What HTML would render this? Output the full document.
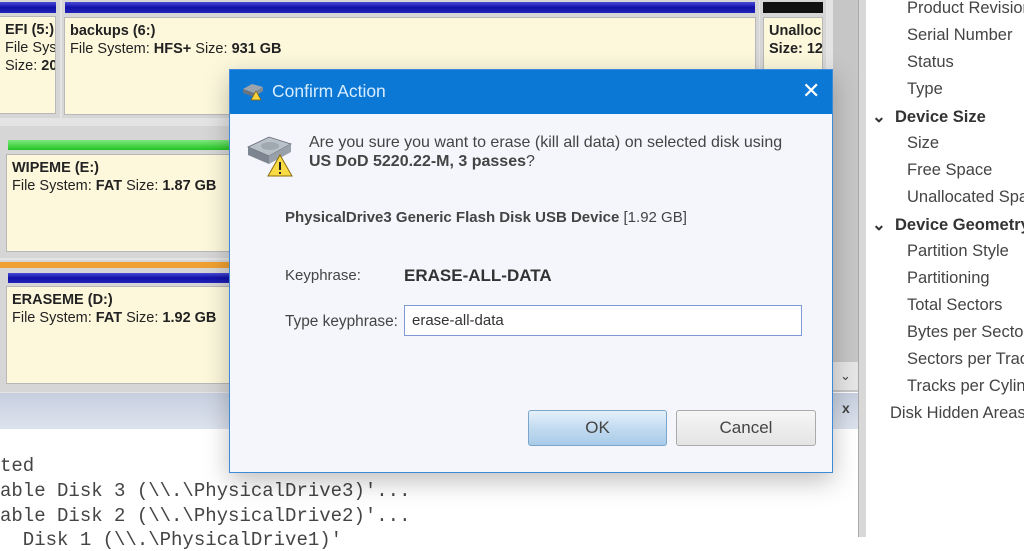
<!DOCTYPE html>
<html><head><meta charset="utf-8"><style>
*{margin:0;padding:0;box-sizing:border-box}
body{width:1024px;height:537px;overflow:hidden;background:#fff;font-family:"Liberation Sans",sans-serif;position:relative;color:#222}
.a{position:absolute}
.part{position:absolute;background:#fdf8dc;border:1px solid #b8b8b8;font-size:14.5px;line-height:18px;padding:4px 5px;color:#222;white-space:nowrap;overflow:hidden}
.bar{position:absolute;height:11px;background:linear-gradient(#4a4ad8,#1010a8 50%,#2424b8)}
.tree{position:absolute;font-size:16.5px;color:#444;white-space:nowrap}
.mono{position:absolute;font-family:"Liberation Mono",monospace;font-size:19px;color:#444;white-space:pre}
</style></head><body>
<div class="a" style="left:0;top:0;width:833px;height:395px;background:#e4e4e4"></div>
<div class="a" style="left:0;top:0;width:60px;height:118px;background:#d6d6d6"></div>
<div class="bar" style="left:0;top:2px;width:56px"></div>
<div class="part" style="left:-1px;top:16px;width:57px;height:98px"><b>EFI (5:)</b><br>File Sys<br>Size: <b>20</b></div>
<div class="a" style="left:62px;top:0;width:697px;height:118px;background:#d6d6d6"></div>
<div class="bar" style="left:65px;top:2px;width:690px"></div>
<div class="part" style="left:64px;top:17px;width:692px;height:98px"><b>backups (6:)</b><br>File System: <b>HFS+</b> Size: <b>931 GB</b></div>
<div class="a" style="left:760px;top:0;width:66px;height:118px;background:#d6d6d6"></div>
<div class="bar" style="left:763px;top:2px;width:60px;background:#111"></div>
<div class="part" style="left:763px;top:17px;width:60px;height:98px"><b>Unalloc</b><br><b>Size: 12</b></div>
<div class="a" style="left:0;top:126px;width:833px;height:132px;background:#d6d6d6"></div>
<div class="bar" style="left:8px;top:140px;width:230px;height:10px;background:linear-gradient(#7ee87e,#22c422)"></div>
<div class="part" style="left:6px;top:154px;width:230px;height:98px"><b>WIPEME (E:)</b><br>File System: <b>FAT</b> Size: <b>1.87 GB</b></div>
<div class="a" style="left:0;top:260px;width:833px;height:132px;background:#d6d6d6"></div>
<div class="a" style="left:0;top:262px;width:240px;height:6px;background:#f0a030"></div>
<div class="bar" style="left:8px;top:273px;width:230px;height:10px"></div>
<div class="part" style="left:6px;top:286px;width:230px;height:98px"><b>ERASEME (D:)</b><br>File System: <b>FAT</b> Size: <b>1.92 GB</b></div>
<div class="a" style="left:833px;top:0;width:25px;height:392px;background:#c6c6c6"></div>
<div class="a" style="left:833px;top:362px;width:25px;height:28px;background:#e6e6e6;font-size:13px;text-align:center;line-height:28px;color:#444">&#8964;</div>
<div class="a" style="left:858px;top:0;width:8px;height:537px;background:#d8d8d8;border-left:1px solid #aaa"></div>
<div class="a" style="left:0;top:393px;width:858px;height:36px;background:linear-gradient(#c7cfdf,#dde3ee)"></div>
<div class="a" style="left:842px;top:400px;width:16px;height:24px;font-size:14px;font-weight:bold;color:#444">x</div>
<div class="mono" style="left:0;top:455px">ted</div>
<div class="mono" style="left:0;top:480px">able Disk 3 (\\.\PhysicalDrive3)'...</div>
<div class="mono" style="left:0;top:505px">able Disk 2 (\\.\PhysicalDrive2)'...</div>
<div class="mono" style="left:0;top:529px">  Disk 1 (\\.\PhysicalDrive1)'</div>
<div class="tree" style="left:907px;top:-1px">Product Revision</div>
<div class="tree" style="left:907px;top:26px">Serial Number</div>
<div class="tree" style="left:907px;top:53px">Status</div>
<div class="tree" style="left:907px;top:80px">Type</div>
<div class="tree" style="left:872px;top:107px;font-weight:bold;color:#333">&#8964;&nbsp; Device Size</div>
<div class="tree" style="left:907px;top:134px">Size</div>
<div class="tree" style="left:907px;top:161px">Free Space</div>
<div class="tree" style="left:907px;top:188px">Unallocated Space</div>
<div class="tree" style="left:872px;top:215px;font-weight:bold;color:#333">&#8964;&nbsp; Device Geometry</div>
<div class="tree" style="left:907px;top:242px">Partition Style</div>
<div class="tree" style="left:907px;top:269px">Partitioning</div>
<div class="tree" style="left:907px;top:296px">Total Sectors</div>
<div class="tree" style="left:907px;top:323px">Bytes per Sector</div>
<div class="tree" style="left:907px;top:350px">Sectors per Track</div>
<div class="tree" style="left:907px;top:377px">Tracks per Cylinder</div>
<div class="tree" style="left:890px;top:404px">Disk Hidden Areas</div>
<div class="a" style="left:229px;top:69px;width:604px;height:404px;background:#f4f6fb;border:1px solid #3c8ad8;box-shadow:0 8px 24px rgba(0,0,0,.25)">
 <div class="a" style="left:0;top:0;width:602px;height:44px;background:#0a78d4"></div>
 <svg class="a" style="left:11px;top:11px" width="24" height="22" viewBox="0 0 24 22"><path d="M2 8l9-5 11 3-9 6z" fill="#9aa4ae"/><path d="M2 8l11 4v4L2 12z" fill="#6a7480"/><path d="M13 12l9-6v4l-9 6z" fill="#808a94"/><path d="M15 10l5 9H10z" fill="#f7d23a" stroke="#806010" stroke-width=".7"/></svg>
 <div class="a" style="left:42px;top:11px;font-size:17.5px;color:#d8ecff">Confirm Action</div>
 <div class="a" style="left:572px;top:8px;font-size:22px;color:#fff;font-weight:300">&#x2715;</div>
 <svg class="a" style="left:15px;top:63px" width="50" height="44" viewBox="0 0 50 44"><path d="M3 14L24 4l22 7-22 12z" fill="#b8c0c8" stroke="#667" stroke-width=".8"/><path d="M3 14l21 9v8L3 22z" fill="#7c8590"/><path d="M24 23l22-12v8L24 31z" fill="#98a0aa"/><ellipse cx="25" cy="13" rx="9" ry="4" fill="#a0a8b0"/><path d="M35 22l12 21H23z" fill="#f9dc45" stroke="#8a6a10"/><rect x="34" y="29" width="2" height="8" fill="#222"/><rect x="34" y="39" width="2" height="2" fill="#222"/></svg>
 <div class="a" style="left:79px;top:63px;font-size:16px;line-height:19px;color:#444">Are you sure you want to erase (kill all data) on selected disk using<br><b>US DoD 5220.22-M, 3 passes</b>?</div>
 <div class="a" style="left:55px;top:139px;font-size:15px;color:#444"><b>PhysicalDrive3 Generic Flash Disk USB Device</b> [1.92 GB]</div>
 <div class="a" style="left:55px;top:197px;font-size:15px;color:#444">Keyphrase:</div>
 <div class="a" style="left:174px;top:196px;font-size:17px;font-weight:bold;color:#333">ERASE-ALL-DATA</div>
 <div class="a" style="left:55px;top:243px;font-size:15.4px;color:#444">Type keyphrase:</div>
 <div class="a" style="left:174px;top:235px;width:398px;height:31px;background:#fff;border:1px solid #7d9ad4;font-size:15px;color:#333;padding:6px 7px">erase-all-data</div>
 <div class="a" style="left:298px;top:340px;width:139px;height:36px;border:1px solid #7aa6cc;border-radius:3px;background:linear-gradient(#e6f1fb,#c2dbf0 50%,#a9cbe8);text-align:center;line-height:34px;font-size:17px;color:#444">OK</div>
 <div class="a" style="left:446px;top:340px;width:140px;height:36px;border:1px solid #aaa;border-radius:3px;background:linear-gradient(#f6f6f6,#e4e4e4);text-align:center;line-height:34px;font-size:17px;color:#444">Cancel</div>
</div>
</body></html>
